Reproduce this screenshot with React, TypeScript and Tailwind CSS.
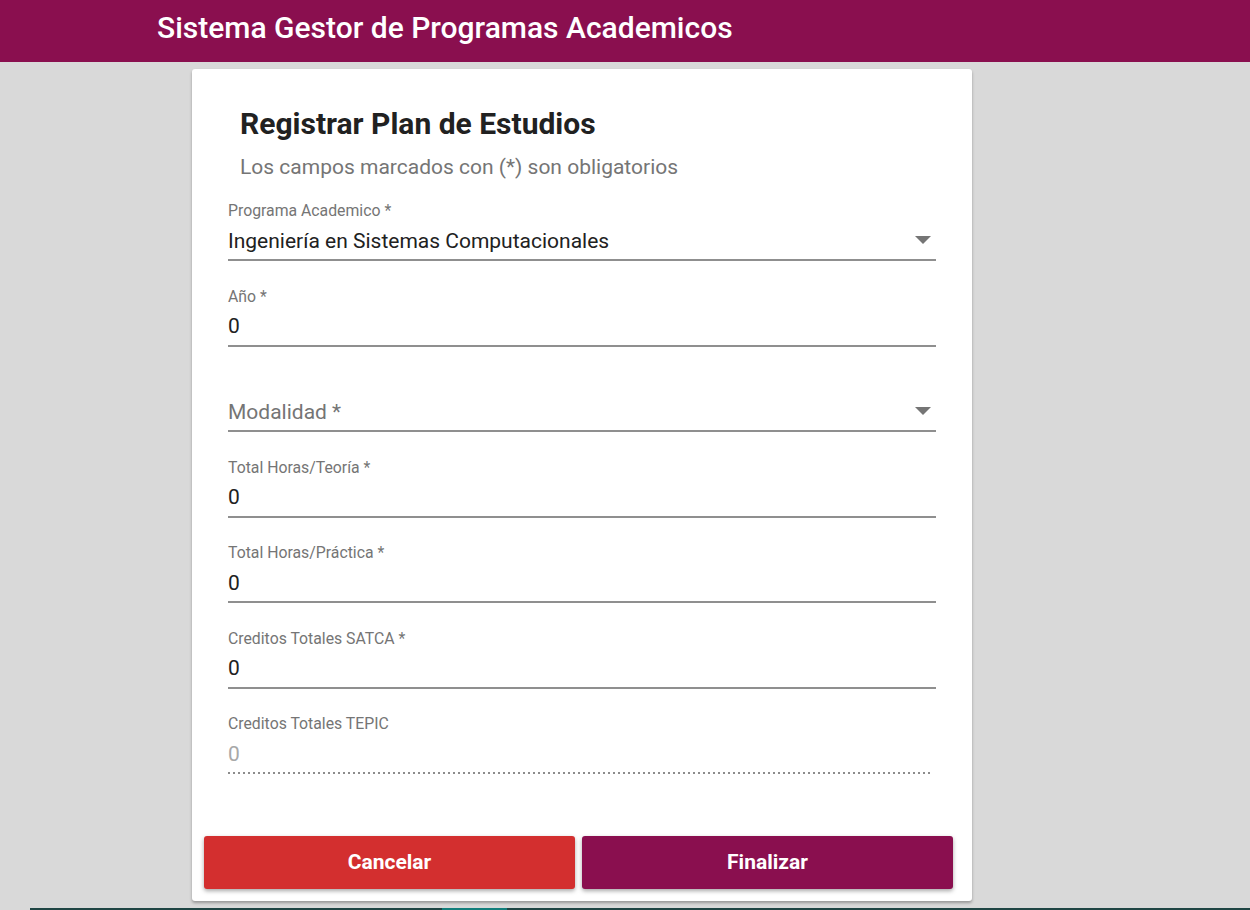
type FieldProps = {
  label?: string;
  value?: string;
  placeholder?: string;
  select?: boolean;
  disabled?: boolean;
};

const Field = ({ label, value, placeholder, select, disabled }: FieldProps) => {
  return (
    <div className="flex flex-col h-[85.5px]">
      <div className="h-[18px] text-[15.8px] leading-[18px] text-[#757575]">
        {label}
      </div>
      <div className="flex items-center justify-between mt-[8.5px] h-[25px]">
        {placeholder ? (
          <span className="text-[21px] leading-[25px] text-[#757575]">
            {placeholder}
          </span>
        ) : (
          <span
            className={
              disabled
                ? "text-[21px] leading-[25px] text-[#a8a8a8]"
                : "text-[21px] leading-[25px] text-[#212121]"
            }
          >
            {value}
          </span>
        )}
        {select && (
          <svg width="16" height="8" viewBox="0 0 16 8" className="mr-[5px] -mt-[2px]">
            <path d="M0 0 L16 0 L8 8 Z" fill="#757575" />
          </svg>
        )}
      </div>
      {disabled ? (
        <div className="mt-[5.5px] h-[2px] w-[704px] bg-[linear-gradient(to_right,rgba(0,0,0,0.45)_0_2px,transparent_2px_5px)] bg-[length:5px_2px]" />
      ) : (
        <div className="mt-[5.5px] h-[2px] bg-[#8f8f8f]" />
      )}
    </div>
  );
};

export default function App() {
  return (
    <div
      className="w-[1250px] h-[910px] bg-[#d9d9d9] flex flex-col overflow-hidden"
      style={{ fontFamily: "Roboto, 'Liberation Sans', sans-serif" }}
    >
      <header className="h-[62px] bg-[#8a0f4f] flex items-center pl-[157px] shrink-0">
        <h1 className="text-[30px] font-medium text-white leading-none -mt-[6px]">
          Sistema Gestor de Programas Academicos
        </h1>
      </header>
      <div className="pl-[192px] pt-[7px] shrink-0">
        <div className="w-[780px] h-[832px] bg-white rounded-[3px] shadow-[0_2px_3px_rgba(0,0,0,0.3)] flex flex-col">
          <div className="pl-[48px] pt-[37px]">
            <h2 className="text-[30px] font-bold text-[#212121] leading-[36px]">
              Registrar Plan de Estudios
            </h2>
            <p className="mt-[12.5px] text-[21px] leading-[25px] text-[#757575]">
              Los campos marcados con (*) son obligatorios
            </p>
          </div>
          <div className="pl-[36px] pr-[36px] mt-[22.5px] flex flex-col">
            <Field
              label="Programa Academico *"
              value="Ingeniería en Sistemas Computacionales"
              select
            />
            <Field label="Año *" value="0" />
            <Field placeholder="Modalidad *" select />
            <Field label="Total Horas/Teoría *" value="0" />
            <Field label="Total Horas/Práctica *" value="0" />
            <Field label="Creditos Totales SATCA *" value="0" />
            <Field label="Creditos Totales TEPIC" value="0" disabled />
          </div>
          <div className="flex gap-[7px] pl-[12px] mt-[35.5px]">
            <button className="w-[371px] h-[53px] rounded-[3px] bg-[#d32f2f] text-white text-[21px] font-bold shadow-[0_2px_4px_rgba(0,0,0,0.35)]">
              Cancelar
            </button>
            <button className="w-[371px] h-[53px] rounded-[3px] bg-[#8a0f4f] text-white text-[21px] font-bold shadow-[0_2px_4px_rgba(0,0,0,0.35)]">
              Finalizar
            </button>
          </div>
        </div>
      </div>
      <div className="mt-[7px] h-[2px] flex shrink-0">
        <div className="w-[30px] bg-[#d9d9d9]" />
        <div className="w-[412px] bg-[#1f4544]" />
        <div className="w-[65px] bg-[#137e7b]" />
        <div className="flex-1 bg-[#1f4544]" />
      </div>
    </div>
  );
}
